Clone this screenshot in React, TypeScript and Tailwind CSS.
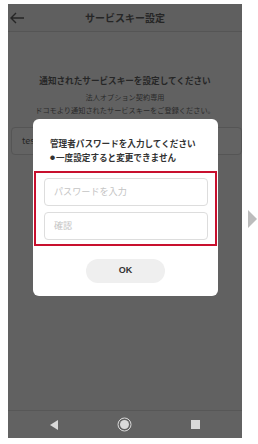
import React from 'react'

const JP = { fontFamily: '"Noto Sans CJK JP", "Noto Sans", sans-serif' }

export default function App() {
  return (
    <div className="w-[258px] h-[444px] bg-white flex pt-[4px] pl-[8px]" style={JP}>
      {/* phone screen */}
      <div className="relative w-[234px] h-[434px] bg-[#616161] flex flex-col">
        {/* header */}
        <div className="h-[28px] flex items-center border-b border-[#555555] bg-[#5f5f5f] relative">
          <svg width="16" height="12" viewBox="0 0 16 12" className="ml-[1px]">
            <path d="M15 6H2M7 1L2 6l5 5" fill="none" stroke="#262626" strokeWidth="1.4" />
          </svg>
          <div className="absolute inset-0 flex items-center justify-center text-[10px] font-bold text-[#262626]">
            サービスキー設定
          </div>
        </div>

        {/* body */}
        <div className="flex-1 flex flex-col items-center">
          <div className="mt-[42px] text-[8.6px] font-bold text-[#262626] leading-[12px]">
            通知されたサービスキーを設定してください
          </div>
          <div className="mt-[5px] text-[7.2px] text-[#2a2a2a] leading-[12px]">法人オプション契約専用</div>
          <div className="mt-[1px] text-[7.2px] text-[#2a2a2a] leading-[12px] whitespace-nowrap">
            ドコモより通知されたサービスキーをご登録ください。
          </div>
          <div className="mt-[11px] w-[231px] ml-[3px] h-[28px] rounded-[4px] border border-[#555555] bg-[#636363] flex items-center px-[10px] text-[9px] text-[#262626]">
            tes
          </div>
        </div>

        {/* nav bar */}
        <div className="h-[28px] border-t border-[#575757] bg-[#626262] flex items-center justify-between px-[42px]">
          <svg width="8" height="10" viewBox="0 0 8 10">
            <path d="M8 0v10L0 5z" fill="#d9d9d9" />
          </svg>
          <svg width="15" height="15" viewBox="0 0 15 15">
            <circle cx="7.5" cy="7.5" r="6.5" fill="none" stroke="#d9d9d9" strokeWidth="1" />
            <circle cx="7.5" cy="7.5" r="4.5" fill="#d9d9d9" />
          </svg>
          <div className="w-[9px] h-[9px] bg-[#d9d9d9]" />
        </div>

        {/* dialog */}
        <div className="absolute left-[25px] top-[115px] w-[185px] bg-white rounded-[6px] flex flex-col pt-[17px] pb-[13px]">
          <div className="px-[17px] text-[8.6px] font-bold text-[#333333] leading-[14px]">
            <div>管理者パスワードを入力してください</div>
            <div className="flex items-center">
              <span className="text-[5px] mr-[1px]">●</span>
              <span>一度設定すると変更できません</span>
            </div>
          </div>
          <div className="mx-[1px] mt-[7px] border-2 border-[#c8102e] pt-[5px] pb-[4px] pl-[8px] pr-[7px] flex flex-col gap-[6px]">
            <div className="h-[28px] rounded-[4px] border border-[#dddddd] flex items-center px-[9px] text-[9.1px] text-[#c4c4c4]">
              パスワードを入力
            </div>
            <div className="h-[28px] rounded-[4px] border border-[#dddddd] flex items-center px-[9px] text-[9.1px] text-[#c4c4c4]">
              確認
            </div>
          </div>
          <div className="mt-[13px] self-center w-[79px] h-[24px] rounded-full bg-[#efefef] flex items-center justify-center text-[9px] font-bold text-[#333333]" style={{ fontFamily: '"Liberation Sans", sans-serif' }}>
            OK
          </div>
        </div>
      </div>

      {/* next arrow */}
      <div className="flex-1 flex items-center justify-center">
        <svg width="9" height="18" viewBox="0 0 9 18" className="mt-[-10px] ml-[4px]">
          <path d="M0 0l9 9-9 9z" fill="#bcbcbc" />
        </svg>
      </div>
    </div>
  )
}
